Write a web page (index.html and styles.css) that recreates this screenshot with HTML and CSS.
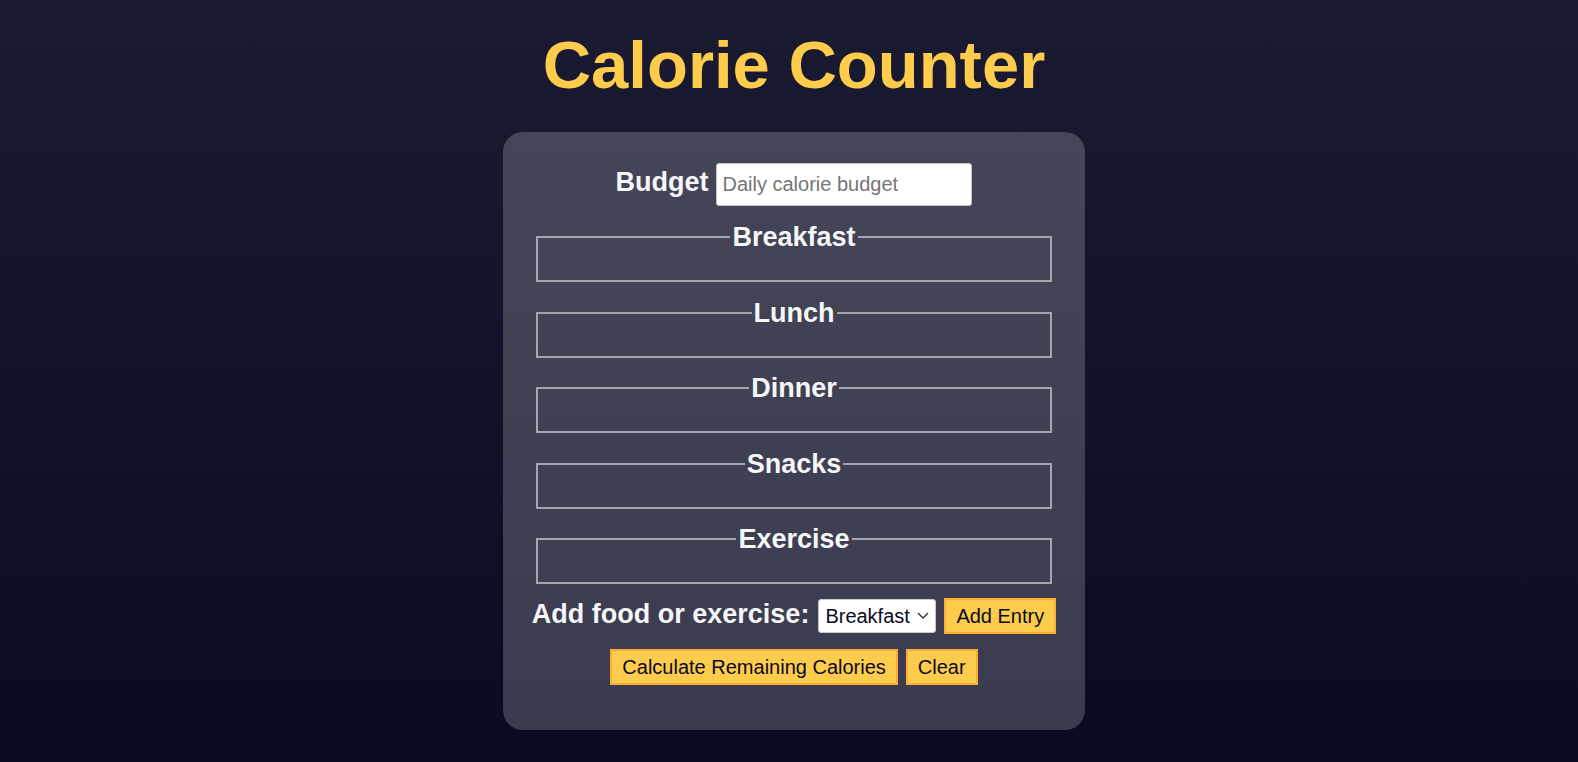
FILE: index.html
```html
<!DOCTYPE html>
<html lang="en">
<head>
<meta charset="utf-8">
<title>Calorie Counter</title>
<link rel="stylesheet" href="styles.css">
</head>
<body>
<main class="page">
  <h1 class="title">Calorie Counter</h1>
  <div class="card">
    <form class="calorie-form">
      <div class="budget-row">
        <label class="big-label" for="budget">Budget</label>
        <input class="budget-input" type="number" id="budget" placeholder="Daily calorie budget">
      </div>
      <fieldset class="meal"><legend>Breakfast</legend><div class="input-container"></div></fieldset>
      <fieldset class="meal"><legend>Lunch</legend><div class="input-container"></div></fieldset>
      <fieldset class="meal"><legend>Dinner</legend><div class="input-container"></div></fieldset>
      <fieldset class="meal"><legend>Snacks</legend><div class="input-container"></div></fieldset>
      <fieldset class="meal"><legend>Exercise</legend><div class="input-container"></div></fieldset>
      <div class="controls">
        <label class="big-label" for="entry-dropdown">Add food or exercise:</label>
        <span class="select-wrap">
          <select class="entry-select" id="entry-dropdown">
            <option value="breakfast" selected>Breakfast</option>
            <option value="lunch">Lunch</option>
            <option value="dinner">Dinner</option>
            <option value="snacks">Snacks</option>
            <option value="exercise">Exercise</option>
          </select>
          <svg class="chevron" width="12" height="7" viewBox="0 0 12 7" aria-hidden="true"><path d="M1 1 L6 6 L11 1" fill="none" stroke="#2a2a3a" stroke-width="1.3"/></svg>
        </span>
        <button type="button" class="btn">Add Entry</button>
      </div>
      <div class="actions">
        <button type="submit" class="btn">Calculate Remaining Calories</button>
        <button type="button" class="btn">Clear</button>
      </div>
    </form>
  </div>
</main>
</body>
</html>
```

FILE: styles.css
```css
html {
  height: 100%;
}

body {
  margin: 0;
  min-height: 100%;
  background: linear-gradient(#1a1a31, #0a0a23);
  color: #f5f6f7;
  font-family: "Liberation Sans", Arial, sans-serif;
}

.page {
  display: flex;
  flex-direction: column;
  align-items: center;
  padding-left: 10px;
}

.title {
  margin: 26px 0 0;
  font-size: 67px;
  line-height: 78px;
  font-weight: 700;
  color: #fecc4c;
}

.card {
  margin-top: 28px;
  width: 582px;
  box-sizing: border-box;
  padding: 31px 33px 45.5px;
  border-radius: 20px;
  background: rgba(255, 255, 255, 0.2);
}

.calorie-form {
  display: flex;
  flex-direction: column;
}

.big-label {
  font-size: 27px;
  line-height: 30px;
  font-weight: 700;
  color: #f5f6f7;
  white-space: nowrap;
}

.budget-row {
  display: flex;
  justify-content: center;
  align-items: baseline;
  gap: 8px;
}

.budget-input {
  box-sizing: border-box;
  width: 256px;
  height: 43px;
  padding: 0 5px;
  border: 1px solid #c4c4c4;
  border-radius: 3px;
  background: #fff;
  font-family: "Liberation Sans", Arial, sans-serif;
  font-size: 20px;
  color: #0a0a23;
}

.budget-input::placeholder {
  color: #757575;
}

.meal {
  margin: 15.5px 0 0;
  padding: 0 12px 28px;
  border: 2px solid #a6a5ab;
  min-width: 0;
}

.budget-row + .meal {
  margin-top: 16.3px;
}

.meal legend {
  margin: 0 auto;
  padding: 0 2px;
  font-size: 27px;
  line-height: 30px;
  font-weight: 700;
  color: #f5f6f7;
}

.controls {
  margin-top: 14px;
  display: flex;
  justify-content: center;
  align-items: baseline;
  gap: 8px;
}

.controls > * {
  flex-shrink: 0;
}

.controls .big-label {
  margin-right: 1px;
}

.select-wrap {
  position: relative;
  display: inline-flex;
}

.entry-select {
  box-sizing: border-box;
  width: 118px;
  height: 34px;
  padding: 0 20px 0 6px;
  border: 1px solid #c8c8c8;
  border-radius: 3px;
  background: #fff;
  color: #0a0a23;
  font-family: "Liberation Sans", Arial, sans-serif;
  font-size: 20px;
  appearance: none;
  -webkit-appearance: none;
}

.chevron {
  position: absolute;
  right: 7px;
  top: 13px;
  pointer-events: none;
}

.actions {
  margin-top: 14.7px;
  display: flex;
  justify-content: center;
  gap: 8px;
}

.btn {
  padding: 4px 10px;
  border: 2px solid #feac32;
  border-radius: 0;
  background: #fecc4c;
  color: #0a0a23;
  font-family: "Liberation Sans", Arial, sans-serif;
  font-size: 20px;
  line-height: 24px;
  white-space: nowrap;
  cursor: pointer;
}
```
